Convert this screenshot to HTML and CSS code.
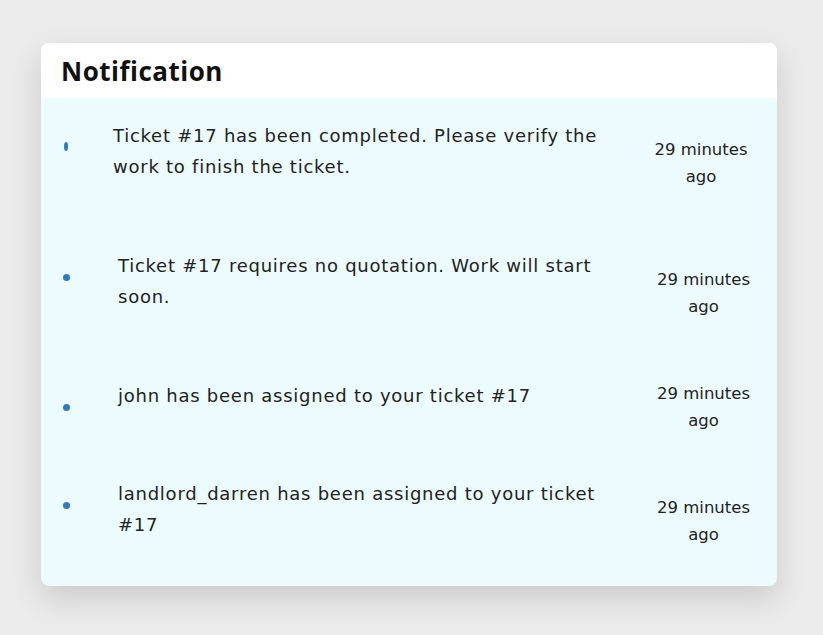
FILE: index.html
```html
<!DOCTYPE html>
<html lang="en">
<head>
<meta charset="utf-8">
<title>Notification</title>
<link rel="stylesheet" href="styles.css">
</head>
<body>
<div class="card">
  <div class="card-header">
    <h1 class="title">Notification</h1>
  </div>
  <div class="list">
    <div class="row row--first">
      <span class="dot dot--narrow"></span>
      <p class="message">Ticket #17 has been completed. Please verify the work to finish the ticket.</p>
      <div class="time">29 minutes<br>ago</div>
    </div>
    <div class="row">
      <span class="dot"></span>
      <p class="message">Ticket #17 requires no quotation. Work will start soon.</p>
      <div class="time">29 minutes<br>ago</div>
    </div>
    <div class="row row--single">
      <span class="dot"></span>
      <p class="message">john has been assigned to your ticket #17</p>
      <div class="time">29 minutes<br>ago</div>
    </div>
    <div class="row">
      <span class="dot"></span>
      <p class="message">landlord_darren has been assigned to your ticket #17</p>
      <div class="time">29 minutes<br>ago</div>
    </div>
  </div>
</div>
</body>
</html>
```
FILE: styles.css
```css
* { box-sizing: border-box; }
html, body { margin: 0; height: 100%; }
body {
  background: #ebebeb;
  padding: 43px 0 0 41px;
  font-family: "DejaVu Sans", "Liberation Sans", sans-serif;
  color: #222;
}
.card {
  width: 736px;
  border-radius: 8px;
  overflow: hidden;
  background: #ecfcfe;
  box-shadow: 0 12px 30px rgba(0,0,0,0.14);
}
.card-header {
  background: #ffffff;
  height: 55px;
  display: flex;
  align-items: center;
  padding-left: 20px;
}
.title {
  margin: 0;
  font-family: "Open Sans", "Liberation Sans", sans-serif;
  font-size: 26px;
  font-weight: 700;
  color: #111;
  letter-spacing: 0.5px;
}
.list {
  display: flex;
  flex-direction: column;
  gap: 16px;
  padding-bottom: 16px;
}
.row {
  display: flex;
  align-items: center;
  height: 98px;
  padding: 0 26px 0 22px;
}
.row--first { height: 130px; }
.dot {
  flex: none;
  width: 7px;
  height: 7px;
  border-radius: 50%;
  background: #2c7cc0;
  margin-bottom: 32px;
}
.dot--narrow { width: 4px; height: 9px; margin-left: 1px; margin-right: -1px; margin-bottom: 33px; }
.row--single .dot { margin-bottom: 0; }
.message {
  flex: none;
  width: 510px;
  margin: 0 0 24px 48px;
  font-size: 18px;
  line-height: 31px;
  letter-spacing: 0.75px;
}
.row--first .message { margin-left: 46px; }
.time {
  flex: 1;
  text-align: center;
  font-size: 16.5px;
  line-height: 27px;
  padding-left: 28px;
}
```
